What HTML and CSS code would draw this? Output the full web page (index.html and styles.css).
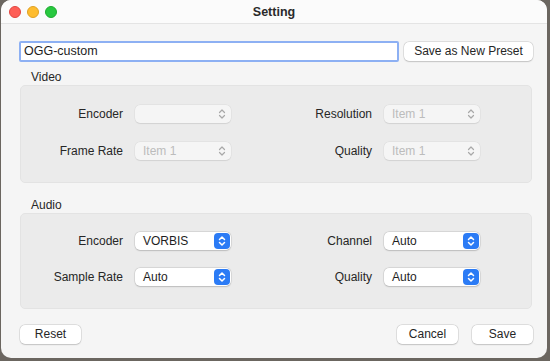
FILE: index.html
```html
<!DOCTYPE html>
<html>
<head>
<meta charset="utf-8">
<link rel="stylesheet" href="styles.css">
</head>
<body>
<div class="window">
  <div class="titlebar">
    <div class="lights">
      <span class="light red"></span>
      <span class="light yellow"></span>
      <span class="light green"></span>
    </div>
    <div class="title">Setting</div>
    <div></div>
  </div>
  <div class="content">
    <div class="preset-row">
      <div class="field">OGG-custom</div>
      <button class="btn preset-btn">Save as New Preset</button>
    </div>

    <div class="group-label video-label">Video</div>
    <div class="box video-box">
      <div class="lbl">Encoder</div>
      <div class="popup disabled"><span></span><svg class="chev" viewBox="0 0 8 12"><path d="M1.5 4.5 L4 2 L6.5 4.5 M1.5 7.5 L4 10 L6.5 7.5"/></svg></div>
      <div class="lbl">Resolution</div>
      <div class="popup disabled"><span>Item 1</span><svg class="chev" viewBox="0 0 8 12"><path d="M1.5 4.5 L4 2 L6.5 4.5 M1.5 7.5 L4 10 L6.5 7.5"/></svg></div>
      <div class="lbl">Frame Rate</div>
      <div class="popup disabled"><span>Item 1</span><svg class="chev" viewBox="0 0 8 12"><path d="M1.5 4.5 L4 2 L6.5 4.5 M1.5 7.5 L4 10 L6.5 7.5"/></svg></div>
      <div class="lbl">Quality</div>
      <div class="popup disabled"><span>Item 1</span><svg class="chev" viewBox="0 0 8 12"><path d="M1.5 4.5 L4 2 L6.5 4.5 M1.5 7.5 L4 10 L6.5 7.5"/></svg></div>
    </div>

    <div class="group-label audio-label">Audio</div>
    <div class="box audio-box">
      <div class="lbl">Encoder</div>
      <div class="popup"><span>VORBIS</span><span class="step"><svg class="chev" viewBox="0 0 8 12"><path d="M1.5 4.5 L4 2 L6.5 4.5 M1.5 7.5 L4 10 L6.5 7.5"/></svg></span></div>
      <div class="lbl">Channel</div>
      <div class="popup"><span>Auto</span><span class="step"><svg class="chev" viewBox="0 0 8 12"><path d="M1.5 4.5 L4 2 L6.5 4.5 M1.5 7.5 L4 10 L6.5 7.5"/></svg></span></div>
      <div class="lbl">Sample Rate</div>
      <div class="popup"><span>Auto</span><span class="step"><svg class="chev" viewBox="0 0 8 12"><path d="M1.5 4.5 L4 2 L6.5 4.5 M1.5 7.5 L4 10 L6.5 7.5"/></svg></span></div>
      <div class="lbl">Quality</div>
      <div class="popup"><span>Auto</span><span class="step"><svg class="chev" viewBox="0 0 8 12"><path d="M1.5 4.5 L4 2 L6.5 4.5 M1.5 7.5 L4 10 L6.5 7.5"/></svg></span></div>
    </div>

    <div class="footer">
      <button class="btn small">Reset</button>
      <div class="spacer"></div>
      <button class="btn small">Cancel</button>
      <button class="btn small">Save</button>
    </div>
  </div>
</div>
</body>
</html>
```

FILE: styles.css
```css
html, body {
  margin: 0;
  padding: 0;
}
body {
  width: 550px;
  height: 361px;
  background: #6b6660;
  font-family: "Liberation Sans", Arial, sans-serif;
  font-size: 12px;
  color: #262626;
  overflow: hidden;
}
.window {
  margin-left: 1px;
  width: 546px;
  height: 358px;
  background: #f5f5f5;
  border-radius: 10px;
  overflow: hidden;
  display: flex;
  flex-direction: column;
}
.titlebar {
  height: 23px;
  flex: none;
  background: #fbfbfb;
  border-bottom: 1px solid #e4e4e4;
  display: grid;
  grid-template-columns: 1fr auto 1fr;
  align-items: center;
}
.lights {
  display: flex;
  gap: 6px;
  padding-left: 8px;
  padding-top: 1px;
}
.light {
  width: 12px;
  height: 12px;
  border-radius: 50%;
  box-sizing: border-box;
}
.red { background: #fe5f57; border: 0.5px solid #e14640; }
.yellow { background: #febc2e; border: 0.5px solid #dfa023; }
.green { background: #28c840; border: 0.5px solid #1eab2f; }
.title {
  font-weight: bold;
  font-size: 12.5px;
  color: #2a2a2a;
  padding-top: 1px;
}
.content {
  padding: 17px 14px 0 18px;
  display: flex;
  flex-direction: column;
}
.preset-row {
  display: flex;
  gap: 5px;
  align-items: center;
  height: 21px;
}
.field {
  width: 380px;
  height: 21px;
  box-sizing: border-box;
  background: #fff;
  border: 2px solid #8db0f3;
  border-radius: 2px;
  font-size: 12.5px;
  line-height: 17px;
  padding-left: 3px;
  color: #1e1e1e;
}
.btn {
  font-family: inherit;
  font-size: 12px;
  color: #262626;
  background: #fff;
  border: none;
  border-radius: 5px;
  box-shadow: 0 0 0 0.5px rgba(0,0,0,0.14), 0 0.5px 1.5px rgba(0,0,0,0.14);
  height: 19px;
  padding: 0;
  line-height: 19px;
}
.preset-btn {
  width: 129px;
}
.group-label {
  padding-left: 12px;
  height: 15px;
  line-height: 15px;
}
.video-label { margin-top: 8px; }
.audio-label { margin-top: 15px; }
.box {
  width: 512px;
  box-sizing: border-box;
  background: #ebebeb;
  border: 1px solid #e3e3e3;
  border-radius: 5px;
  margin-left: 1px;
  display: grid;
  grid-template-columns: 114px 96px 153px 96px;
  align-items: center;
}
.video-box {
  height: 98px;
  padding-top: 19px;
  row-gap: 19px;
  align-content: start;
}
.audio-box {
  height: 96px;
  padding-top: 18px;
  row-gap: 18px;
  align-content: start;
}
.lbl {
  text-align: right;
  padding-right: 12px;
}
.popup {
  height: 18px;
  border-radius: 5px;
  background: #fff;
  box-shadow: 0 0 0 0.5px rgba(0,0,0,0.12), 0 0.5px 1.5px rgba(0,0,0,0.15);
  display: flex;
  align-items: center;
  justify-content: space-between;
  padding-left: 8px;
  padding-right: 1px;
  box-sizing: border-box;
  color: #1e1e1e;
}
.popup.disabled {
  background: #f5f5f5;
  color: #bcbcbc;
  padding-right: 5px;
  box-shadow: 0 0 0 0.5px rgba(0,0,0,0.05), 0 0.5px 1px rgba(0,0,0,0.08);
}
.chev {
  width: 8px;
  height: 12px;
  fill: none;
  stroke: #a8a8a8;
  stroke-width: 1.2;
  stroke-linecap: round;
  stroke-linejoin: round;
}
.step {
  width: 16px;
  height: 16px;
  border-radius: 4px;
  background: #2b7bf5;
  display: flex;
  align-items: center;
  justify-content: center;
}
.step .chev {
  stroke: #fff;
  stroke-width: 1.5;
}
.footer {
  display: flex;
  gap: 14px;
  margin-top: 16px;
  padding-left: 1px;
}
.spacer { flex: 1; }
.btn.small {
  width: 61px;
}
```
